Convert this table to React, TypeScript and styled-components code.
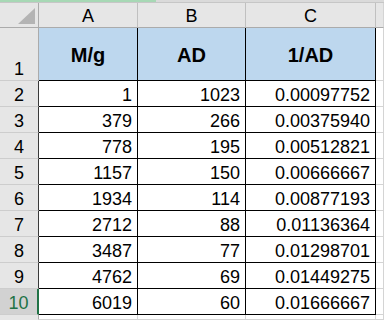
import React from "react";
import styled, { createGlobalStyle, css } from "styled-components";

const GlobalStyle = createGlobalStyle`
  html, body {
    margin: 0;
    padding: 0;
    background: #fff;
  }
  body {
    font-family: "Liberation Sans", Arial, sans-serif;
  }
`;

const Page = styled.div`
  width: 384px;
  height: 320px;
  overflow: hidden;
  background: #fff;
`;

const TopStrip = styled.div`
  display: flex;
  height: 2px;
  border-bottom: 1px solid #c6c6c6;
  background: #dadada;
`;

const TopSelected = styled.div`
  width: 156px;
  background: #a7d8b5;
`;

const Sheet = styled.div`
  display: grid;
  grid-template-columns: 39px 99px 108px 130px 1fr;
  grid-template-rows: 25px 53px repeat(9, 26px) 1fr;
  height: 317px;
  color: #000;
`;

const cellBase = css`
  box-sizing: border-box;
  border-right: 1px solid transparent;
  border-bottom: 1px solid transparent;
  font-size: 18px;
  line-height: 18px;
  display: flex;
  align-items: flex-end;
  padding-bottom: 2px;
  white-space: nowrap;
  overflow: hidden;
`;

const Corner = styled.div`
  ${cellBase};
  position: relative;
  background: #e6e6e6;
  border-right-color: #ababab;
  border-bottom-color: #ababab;
`;

const CornerTriangle = styled.div`
  position: absolute;
  right: 3px;
  bottom: 3px;
  width: 0;
  height: 0;
  border-left: 17px solid transparent;
  border-bottom: 16px solid #b4b4b4;
`;

const ColHead = styled.div`
  ${cellBase};
  justify-content: center;
  align-items: center;
  padding-bottom: 0;
  padding-top: 1px;
  background: #e6e6e6;
  border-right-color: #c0c0c0;
  border-bottom-color: #ababab;
`;

const RowHead = styled.div<{ $active?: boolean; $dark?: boolean }>`
  ${cellBase};
  justify-content: center;
  background: ${(p) => (p.$active ? "#d2d2d2" : "#e6e6e6")};
  color: ${(p) => (p.$active ? "#217346" : "#000")};
  border-bottom-color: #cdcdcd;
  border-right: ${(p) =>
    p.$active
      ? "2px solid #217346"
      : p.$dark
      ? "1px solid #3a3a3a"
      : "1px solid #ababab"};
`;

const HeadCell = styled.div`
  ${cellBase};
  justify-content: center;
  align-items: center;
  padding-bottom: 0;
  padding-top: 2px;
  font-size: 20px;
  font-weight: bold;
  background: #bdd7ee;
  border-right-color: #000;
  border-bottom-color: #000;
`;

const DataCell = styled.div`
  ${cellBase};
  justify-content: flex-end;
  padding-right: 5px;
  background: #fff;
  border-right-color: #000;
  border-bottom-color: #000;
`;

const EmptyCell = styled.div<{ $head?: boolean }>`
  ${cellBase};
  background: ${(p) => (p.$head ? "#e6e6e6" : "#fff")};
  border-right-color: #d4d4d4;
  border-bottom-color: ${(p) => (p.$head ? "#ababab" : "#d4d4d4")};
`;

const RowHeadBlank = styled.div`
  ${cellBase};
  background: #e6e6e6;
  border-right-color: #ababab;
`;

const rows: [number, number, string][] = [
  [1, 1023, "0.00097752"],
  [379, 266, "0.00375940"],
  [778, 195, "0.00512821"],
  [1157, 150, "0.00666667"],
  [1934, 114, "0.00877193"],
  [2712, 88, "0.01136364"],
  [3487, 77, "0.01298701"],
  [4762, 69, "0.01449275"],
  [6019, 60, "0.01666667"],
];

export default function App() {
  return (
    <>
      <GlobalStyle />
      <Page>
        <TopStrip>
          <TopSelected />
        </TopStrip>
        <Sheet>
          <Corner>
            <CornerTriangle />
          </Corner>
          <ColHead>A</ColHead>
          <ColHead>B</ColHead>
          <ColHead>C</ColHead>
          <EmptyCell $head />

          <RowHead>1</RowHead>
          <HeadCell>M/g</HeadCell>
          <HeadCell>AD</HeadCell>
          <HeadCell>1/AD</HeadCell>
          <EmptyCell />

          {rows.map(([m, ad, inv], i) => (
            <React.Fragment key={i}>
              <RowHead $dark $active={i === rows.length - 1}>
                {i + 2}
              </RowHead>
              <DataCell>{m}</DataCell>
              <DataCell>{ad}</DataCell>
              <DataCell>{inv}</DataCell>
              <EmptyCell />
            </React.Fragment>
          ))}

          <RowHeadBlank />
          <EmptyCell />
          <EmptyCell />
          <EmptyCell />
          <EmptyCell />
        </Sheet>
      </Page>
    </>
  );
}
